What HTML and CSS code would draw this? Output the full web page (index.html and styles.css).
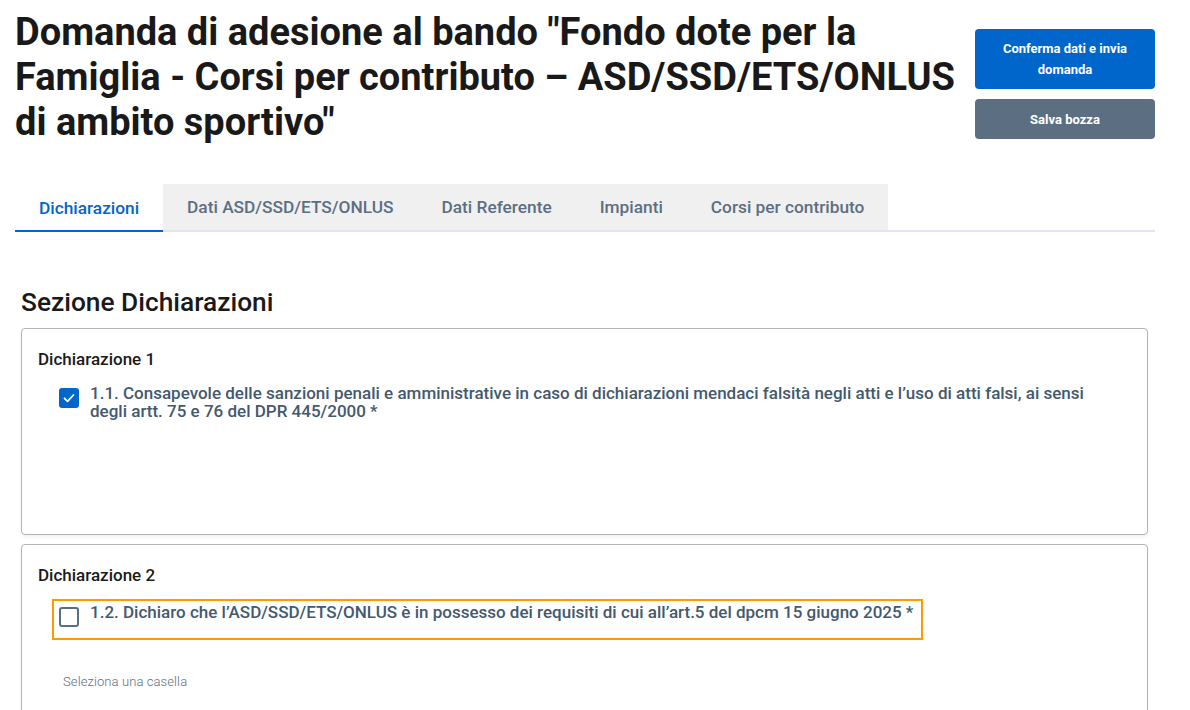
FILE: index.html
```html
<!DOCTYPE html>
<html lang="it">
<head>
<meta charset="utf-8">
<title>Domanda di adesione</title>
<link rel="stylesheet" href="styles.css">
</head>
<body>
<div class="page">
  <header class="header">
    <h1 class="title">Domanda di adesione al bando "Fondo dote per la Famiglia - Corsi per contributo – ASD/SSD/ETS/ONLUS di ambito sportivo"</h1>
    <div class="actions">
      <button class="btn btn-primary">Conferma dati e invia domanda</button>
      <button class="btn btn-secondary">Salva bozza</button>
    </div>
  </header>

  <nav class="tabs">
    <a class="tab tab-active">Dichiarazioni</a>
    <div class="tab-group">
      <a class="tab">Dati ASD/SSD/ETS/ONLUS</a>
      <a class="tab">Dati Referente</a>
      <a class="tab">Impianti</a>
      <a class="tab">Corsi per contributo</a>
    </div>
  </nav>

  <section class="section">
    <h2 class="section-title">Sezione Dichiarazioni</h2>

    <div class="card">
      <div class="card-label">Dichiarazione 1</div>
      <label class="check-row">
        <span class="checkbox checkbox-on">
          <svg viewBox="0 0 20 20" width="20" height="20"><path d="M5.5 10.3l3 3 6-6.3" fill="none" stroke="#fff" stroke-width="1.8" stroke-linecap="round" stroke-linejoin="round"/></svg>
        </span>
        <span class="check-text">1.1. Consapevole delle sanzioni penali e amministrative in caso di dichiarazioni mendaci falsità negli atti e l’uso di atti falsi, ai sensi degli artt. 75 e 76 del DPR 445/2000 *</span>
      </label>
      <div class="helper helper-hidden">Seleziona una casella</div>
    </div>

    <div class="card">
      <div class="card-label">Dichiarazione 2</div>
      <label class="check-row check-focus">
        <span class="checkbox"></span>
        <span class="check-text">1.2. Dichiaro che l’ASD/SSD/ETS/ONLUS è in possesso dei requisiti di cui all’art.5 del dpcm 15 giugno 2025 *</span>
      </label>
      <div class="helper">Seleziona una casella</div>
    </div>
  </section>
</div>
</body>
</html>
```

FILE: styles.css
```css
* { box-sizing: border-box; }

html, body {
  margin: 0;
  padding: 0;
  background: #ffffff;
  font-family: Roboto, "Noto Sans", sans-serif;
  color: #1a1a1a;
}

.page {
  padding: 10px 35px 0 15px;
}

.header {
  display: flex;
  gap: 8px;
  align-items: flex-start;
}

.title {
  flex: 1;
  margin: 0;
  font-size: 38px;
  line-height: 45px;
  font-weight: 700;
  color: #191919;
}

.actions {
  width: 180px;
  flex: none;
  display: flex;
  flex-direction: column;
  gap: 10px;
  margin-top: 19px;
}

.btn {
  border: none;
  border-radius: 4px;
  color: #fff;
  font-family: Roboto, sans-serif;
  font-size: 13px;
  font-weight: 700;
  line-height: 21px;
  padding: 0 24px;
  cursor: pointer;
}

.btn-primary {
  background: #0066cc;
  height: 60px;
}

.btn-secondary {
  background: #5c6f82;
  height: 40px;
}

.tabs {
  display: flex;
  margin-top: 39px;
  border-bottom: 2px solid #e3e5ee;
  height: 48px;
}

.tab-group {
  display: flex;
  background: #f0f0f0;
}

.tab {
  display: flex;
  align-items: center;
  padding: 0 24px;
  height: 46px;
  font-size: 17.3px;
  font-weight: 500;
  color: #5c6f82;
}

.tab-active {
  color: #0066cc;
  height: 48px;
  border-bottom: 2px solid #0066cc;
  padding-top: 2px;
}

.section {
  padding: 0 7px 0 6px;
}

.section-title {
  margin: 55px 0 11px;
  font-size: 26.3px;
  line-height: 30px;
  font-weight: 500;
  color: #1a1a1a;
}

.card {
  border: 1px solid #b4b4b6;
  border-radius: 4px;
  padding: 18px 16px 20px;
  margin-bottom: 9px;
  box-shadow: 0 2px 4px rgba(0, 0, 0, 0.06);
}

.card-label {
  font-size: 17px;
  line-height: 24px;
  font-weight: 500;
  color: #1a1a1a;
}

.check-row {
  display: flex;
  width: fit-content;
  max-width: 1090px;
  margin: 9px 0 0 14px;
  padding: 2px 8px 11px 5px;
  border: 2px solid transparent;
  gap: 11px;
}

.check-focus {
  margin-top: 12px;
  border-color: #ff9900;
}

.checkbox {
  flex: none;
  width: 20px;
  height: 20px;
  margin-top: 4px;
  border: 2px solid #5c6f82;
  border-radius: 3px;
  display: flex;
  align-items: center;
  justify-content: center;
}

.checkbox-on {
  background: #0066cc;
  border-color: #0066cc;
}

.checkbox-on svg {
  flex: none;
}

.check-text {
  font-size: 17px;
  line-height: 18px;
  font-weight: 500;
  color: #44596d;
}

.helper {
  margin: 32px 0 26px 25px;
  font-size: 13px;
  line-height: 20px;
  letter-spacing: 0.1px;
  font-weight: 300;
  color: #5c6f82;
}

.helper-hidden {
  margin-top: 35px;
  margin-bottom: 26px;
  visibility: hidden;
}
```
